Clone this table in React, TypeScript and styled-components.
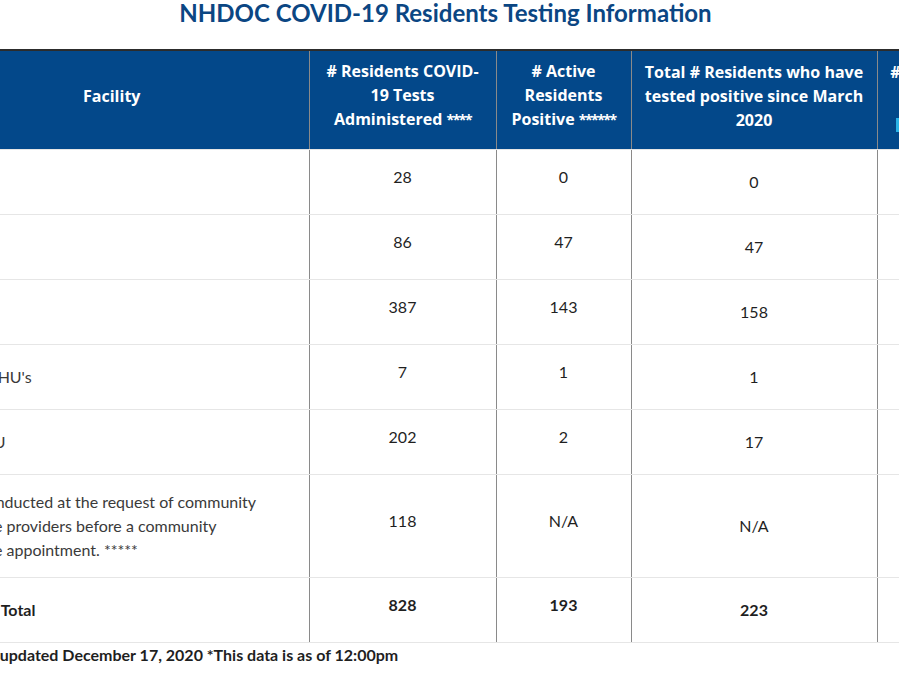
import styled, { createGlobalStyle } from "styled-components";

const GlobalStyle = createGlobalStyle`
    html, body {
        margin: 0;
        padding: 0;
        background: #ffffff;
        overflow: hidden;
    }

    body {
        font-family: Lato, "Open Sans", Arial, sans-serif;
        color: #222222;
    }
`

type Row = {
    facility: string[];
    tests: string;
    active: string;
    total: string;
    recovered: string;
    bold?: boolean;
}

const rows: Row[] = [
    { facility: ["NCF"], tests: "28", active: "0", total: "0", recovered: "0" },
    { facility: ["NHCFW"], tests: "86", active: "47", total: "47", recovered: "0" },
    { facility: ["NHSP-M"], tests: "387", active: "143", total: "158", recovered: "15" },
    { facility: ["Concord THU's"], tests: "7", active: "1", total: "1", recovered: "0" },
    { facility: ["SPU & RTU"], tests: "202", active: "2", total: "17", recovered: "15" },
    {
        facility: [
            "Testing conducted at the request of community",
            "health care providers before a community",
            "health care appointment. *****",
        ],
        tests: "118",
        active: "N/A",
        total: "N/A",
        recovered: "N/A",
    },
    { facility: ["Residents' Total"], tests: "828", active: "193", total: "223", recovered: "30", bold: true },
]

export default function App() {
    return (
        <Page>
            <GlobalStyle />
            <Title>NHDOC COVID-19 Residents Testing Information</Title>
            <TableWrap>
                <Table>
                    <colgroup>
                        <col style={{ width: 394 }} />
                        <col style={{ width: 187 }} />
                        <col style={{ width: 135 }} />
                        <col style={{ width: 246 }} />
                        <col style={{ width: 206 }} />
                    </colgroup>
                    <thead>
                        <tr>
                            <HeadCell>Facility</HeadCell>
                            <HeadCell># Residents COVID-19 Tests Administered <Stars>****</Stars></HeadCell>
                            <HeadCell># Active Residents Positive <Stars>******</Stars></HeadCell>
                            <HeadCell>Total # Residents who have tested positive since March 2020</HeadCell>
                            <HeadCell>
                                # Residents Recovered<br />
                                since March 2020<br />
                                <Badge />
                            </HeadCell>
                        </tr>
                    </thead>
                    <tbody>
                        {rows.map((row) => (
                            <tr key={row.facility[0]}>
                                <FacilityCell $bold={row.bold}>
                                    {row.facility.map((line, i) => (
                                        <span key={line}>
                                            {i > 0 && <br />}
                                            {line}
                                        </span>
                                    ))}
                                </FacilityCell>
                                <Cell $bold={row.bold}><Lifted>{row.tests}</Lifted></Cell>
                                <Cell $bold={row.bold}><Lifted>{row.active}</Lifted></Cell>
                                <Cell $bold={row.bold}>{row.total}</Cell>
                                <Cell $bold={row.bold}>{row.recovered}</Cell>
                            </tr>
                        ))}
                    </tbody>
                </Table>
                <Updated>Figures last updated December 17, 2020 *This data is as of 12:00pm</Updated>
            </TableWrap>
        </Page>
    )
}

const Page = styled.div`
    width: 899px;
    min-height: 674px;
    overflow: hidden;
`

const Title = styled.h1`
    margin: 0 0 24px;
    padding-right: 8px;
    font-size: 24px;
    line-height: 25px;
    font-weight: 700;
    text-align: center;
    color: #0b4683;
`

const TableWrap = styled.div`
    margin-left: -85px;
    width: 1168px;
`

const Table = styled.table`
    width: 1168px;
    table-layout: fixed;
    border-collapse: collapse;
    border-top: 2px solid #2c2c2c;
`

const HeadCell = styled.th`
    background: #03488a;
    color: #ffffff;
    font-family: "Open Sans", Lato, Arial, sans-serif;
    font-size: 16px;
    font-weight: 700;
    line-height: 24px;
    padding: 8px 10px 17px;
    text-align: center;
    vertical-align: middle;
    border-left: 1px solid #8a8a8a;
    border-bottom: 1px solid #e6e6e6;

    &:first-child {
        border-left: none;
    }
`

const Stars = styled.span`
    font-size: 14px;
    letter-spacing: -1.5px;
`

const Badge = styled.span`
    display: inline-block;
    width: 168px;
    height: 14px;
    margin-top: 10px;
    background: #2bb3e6;
    vertical-align: top;
`

const Cell = styled.td<{ $bold?: boolean }>`
    padding: 15px 12px;
    font-size: 16px;
    line-height: 24px;
    font-weight: ${p => (p.$bold ? 700 : 400)};
    text-align: center;
    vertical-align: middle;
    color: #1f1f1f;
    border-left: 1px solid #8a8a8a;
    border-bottom: 1px solid #e6e6e6;
`

const FacilityCell = styled(Cell)`
    text-align: left;
    padding-left: 10px;
    border-left: none;
    color: ${p => (p.$bold ? "#1f1f1f" : "#3a3a3a")};
`

const Lifted = styled.p`
    margin: 0 0 10px;
`

const Updated = styled.p`
    margin: 0;
    font-size: 16px;
    line-height: 24px;
    font-weight: 700;
    color: #1f1f1f;
`
